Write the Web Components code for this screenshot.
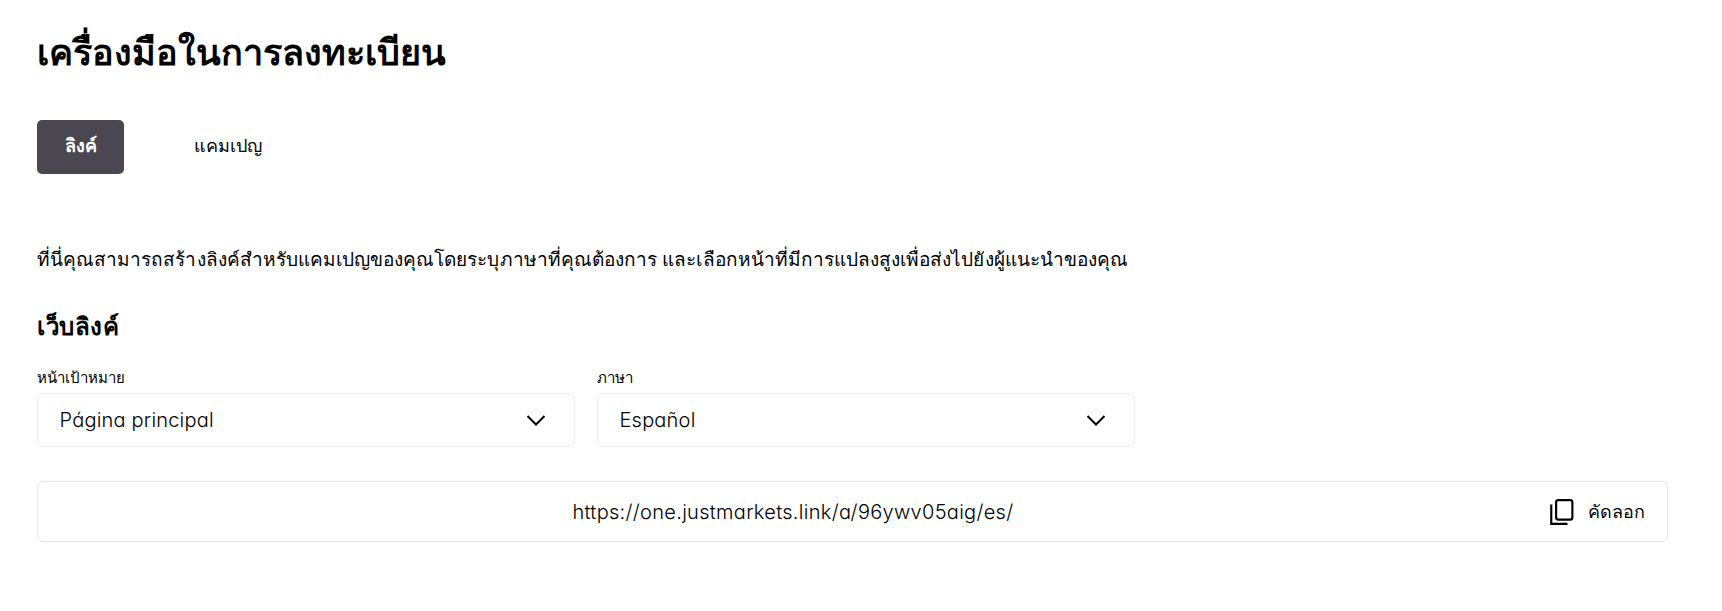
<!DOCTYPE html>
<html lang="th"><head><meta charset="utf-8"><title>เครื่องมือในการลงทะเบียน</title>
<style>
html,body{margin:0;background:#fff;height:100%}
body{font-family:"Liberation Sans",sans-serif;color:#000}
</style></head><body>
<tool-page>
  <h1 slot="title">เครื่องมือในการลงทะเบียน</h1>
  <tab-bar slot="tabs"><tab-btn active>ลิงค์</tab-btn><tab-btn>แคมเปญ</tab-btn></tab-bar>
  <span slot="desc">ที่นี่คุณสามารถสร้างลิงค์สำหรับแคมเปญของคุณโดยระบุภาษาที่คุณต้องการ และเลือกหน้าที่มีการแปลงสูงเพื่อส่งไปยังผู้แนะนำของคุณ</span>
  <span slot="section">เว็บลิงค์</span>
  <select-field slot="fields" label="หน้าเป้าหมาย">Página principal</select-field>
  <select-field slot="fields" label="ภาษา">Español</select-field>
  <link-card slot="link">https://one.justmarkets.link/a/96ywv05aig/es/</link-card>
</tool-page>
<script>
const TH='"Liberation Sans",sans-serif';
const LAT='"Inter","Noto Sans",sans-serif';
class Base extends HTMLElement{
  constructor(){super();this.attachShadow({mode:'open'}).innerHTML=this.markup()}
}
customElements.define('tool-page',class extends Base{markup(){return `<style>
:host{display:flex;flex-direction:column;padding:34px 54px 0 37px;font-family:${TH}}
.title{height:38px;display:flex;align-items:center}
::slotted(h1){font-size:36px;font-weight:700;margin:0;line-height:38px}
.tabs{margin-top:48px}
.desc{margin-top:74px;font-size:19px;line-height:24px;letter-spacing:.04px}
.section{margin-top:40px;font-size:24px;font-weight:700;line-height:30px;letter-spacing:.6px}
.fields{margin-top:27px;display:flex;gap:22px}
.link{margin-top:34px}
</style>
<div class="title"><slot name="title"></slot></div>
<div class="tabs"><slot name="tabs"></slot></div>
<div class="desc"><slot name="desc"></slot></div>
<div class="section"><slot name="section"></slot></div>
<div class="fields"><slot name="fields"></slot></div>
<div class="link"><slot name="link"></slot></div>`}});
customElements.define('tab-bar',class extends Base{markup(){return `<style>:host{display:flex;gap:42px}</style><slot></slot>`}});
customElements.define('tab-btn',class extends Base{markup(){return `<style>
:host{display:flex;align-items:center;box-sizing:border-box;height:54px;padding:0 27.5px 3px;border-radius:5px;font-size:18px;color:#000}
:host([active]){background:#4a4750;color:#fff;font-weight:700}
</style><slot></slot>`}});
customElements.define('select-field',class extends Base{markup(){return `<style>
:host{display:block;width:538px}
.l{font-size:15px;line-height:18px;margin-bottom:6px}
.b{display:flex;align-items:center;justify-content:space-between;height:52px;border:1px solid #eeeeee;border-radius:6px;padding:0 26px 0 21.5px;font:350 20px ${LAT};font-feature-settings:"cv11";letter-spacing:.2px}
svg{width:24px;height:24px;display:block}
</style><div class="l">${this.getAttribute('label')||''}</div>
<div class="b"><slot></slot><svg viewBox="0 0 24 24" fill="none" stroke="#000" stroke-width="2"><path d="M3.5 8 12 16.5 20.5 8"/></svg></div>`}});
customElements.define('link-card',class extends Base{markup(){return `<style>
:host{display:flex;align-items:center;height:59px;border:1px solid #e6e6e6;border-radius:6px;padding:0 22px 0 0;font:350 20px ${LAT};font-feature-settings:"cv11";letter-spacing:.3px}
.u{flex:1;text-align:center}
.c{display:flex;align-items:center;gap:14px;font:18px ${TH};letter-spacing:0}
svg{width:26px;height:26px;display:block}
</style><div class="u"><slot></slot></div>
<div class="c"><svg viewBox="0 0 24 24" fill="none" stroke="#000" stroke-width="2"><path d="M3 5V23H18"/><rect x="7.5" y="1" width="15" height="18" rx="2"/></svg><span>คัดลอก</span></div>`}});
</script></body></html>
